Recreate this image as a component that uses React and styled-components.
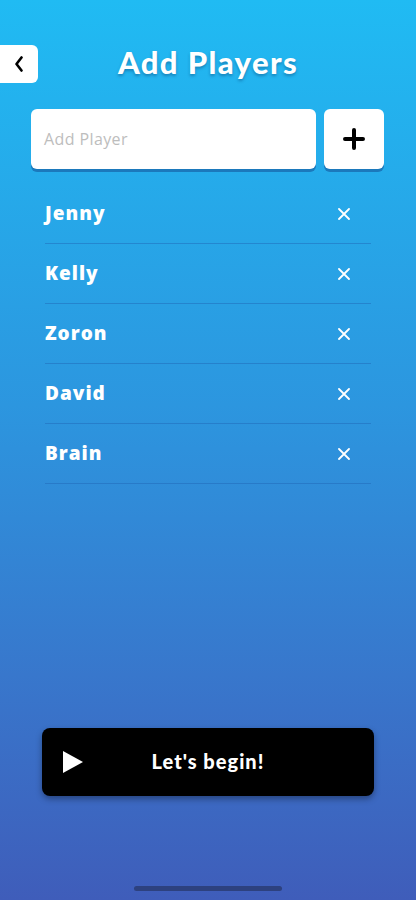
import React from "react";
import styled, { createGlobalStyle } from "styled-components";

const Global = createGlobalStyle`
  html, body { margin: 0; padding: 0; }
  body { font-family: "Open Sans", "Noto Sans", sans-serif; }
  * { box-sizing: border-box; }
`;

const Screen = styled.div`
  width: 416px;
  height: 900px;
  background: linear-gradient(180deg, #20bbf3 0%, #2c96df 45%, #3877cc 75%, #3f5dba 100%);
  display: flex;
  flex-direction: column;
  overflow: hidden;
`;

const Header = styled.div`
  position: relative;
  height: 38px;
  margin-top: 45px;
  display: flex;
  align-items: center;
  justify-content: center;
`;

const BackButton = styled.button`
  position: absolute;
  left: 0;
  top: 0;
  width: 38px;
  height: 38px;
  border: none;
  background: #fff;
  border-radius: 0 6px 6px 0;
  display: flex;
  align-items: center;
  justify-content: center;
  padding: 0;
`;

const Title = styled.h1`
  margin: 0;
  font-family: "Lato", "Open Sans", sans-serif;
  font-weight: 900;
  font-size: 31px;
  color: #fff;
  letter-spacing: 1.4px;
  text-shadow: 0 2px 3px rgba(0, 40, 90, 0.35);
  margin-top: -5px;
`;

const InputRow = styled.div`
  display: flex;
  gap: 8px;
  padding: 0 32px 0 31px;
  margin-top: 26px;
`;

const Input = styled.div`
  flex: 1;
  height: 60px;
  background: #fff;
  border-radius: 6px;
  box-shadow: 0 3px 0 rgba(20, 80, 150, 0.55);
  display: flex;
  align-items: center;
  padding-left: 13px;
  font-family: "Open Sans", sans-serif;
  font-size: 16px;
  color: #bdbdbd;
  letter-spacing: 0.4px;
`;

const AddButton = styled.button`
  width: 60px;
  height: 60px;
  border: none;
  background: #fff;
  border-radius: 6px;
  box-shadow: 0 3px 0 rgba(20, 80, 150, 0.55);
  display: flex;
  align-items: center;
  justify-content: center;
  padding: 0;
`;

const List = styled.div`
  margin: 15px 45px 0 45px;
  display: flex;
  flex-direction: column;
`;

const Row = styled.div`
  height: 60px;
  display: flex;
  align-items: center;
  justify-content: space-between;
  border-bottom: 1px solid rgba(30, 100, 180, 0.45);
  padding-right: 21px;
`;

const Name = styled.span`
  font-family: "Open Sans", sans-serif;
  font-weight: 800;
  font-size: 19px;
  color: #fff;
  letter-spacing: 1px;
  margin-top: -2px;
`;

const Spacer = styled.div`
  flex: 1;
`;

const BeginButton = styled.button`
  margin: 0 42px;
  height: 68px;
  background: #000;
  border: none;
  border-radius: 8px;
  box-shadow: 0 3px 6px rgba(0, 0, 0, 0.35);
  display: flex;
  align-items: center;
  position: relative;
  padding: 0;
`;

const PlayIcon = styled.svg`
  position: absolute;
  left: 21px;
  top: 23px;
`;

const BeginLabel = styled.span`
  flex: 1;
  text-align: center;
  font-family: "Lato", "Open Sans", sans-serif;
  font-weight: 900;
  font-size: 20px;
  color: #fff;
  letter-spacing: 1px;
  margin-top: -3px;
`;

const HomeBar = styled.div`
  width: 148px;
  height: 5px;
  border-radius: 3px;
  background: #2d417f;
  margin: 90px auto 9px;
`;

const players = ["Jenny", "Kelly", "Zoron", "David", "Brain"];

export default function App() {
  return (
    <>
      <Global />
      <Screen>
        <Header>
          <BackButton aria-label="Back">
            <svg width="10" height="16" viewBox="0 0 10 16">
              <path d="M7.5 1.5 L2.5 8 L7.5 14.5" fill="none" stroke="#000" strokeWidth="2.6" strokeLinecap="round" strokeLinejoin="round" />
            </svg>
          </BackButton>
          <Title>Add Players</Title>
        </Header>
        <InputRow>
          <Input>Add Player</Input>
          <AddButton aria-label="Add">
            <svg width="22" height="22" viewBox="0 0 22 22">
              <path d="M11 2 V20 M2 11 H20" stroke="#000" strokeWidth="4" strokeLinecap="round" />
            </svg>
          </AddButton>
        </InputRow>
        <List>
          {players.map((p) => (
            <Row key={p}>
              <Name>{p}</Name>
              <svg width="12" height="12" viewBox="0 0 12 12">
                <path d="M1 1 L11 11 M11 1 L1 11" stroke="#fff" strokeWidth="1.8" strokeLinecap="round" />
              </svg>
            </Row>
          ))}
        </List>
        <Spacer />
        <BeginButton>
          <PlayIcon width="20" height="22" viewBox="0 0 20 22">
            <path d="M0 0 L20 11 L0 22 Z" fill="#fff" />
          </PlayIcon>
          <BeginLabel>Let's begin!</BeginLabel>
        </BeginButton>
        <HomeBar />
      </Screen>
    </>
  );
}
